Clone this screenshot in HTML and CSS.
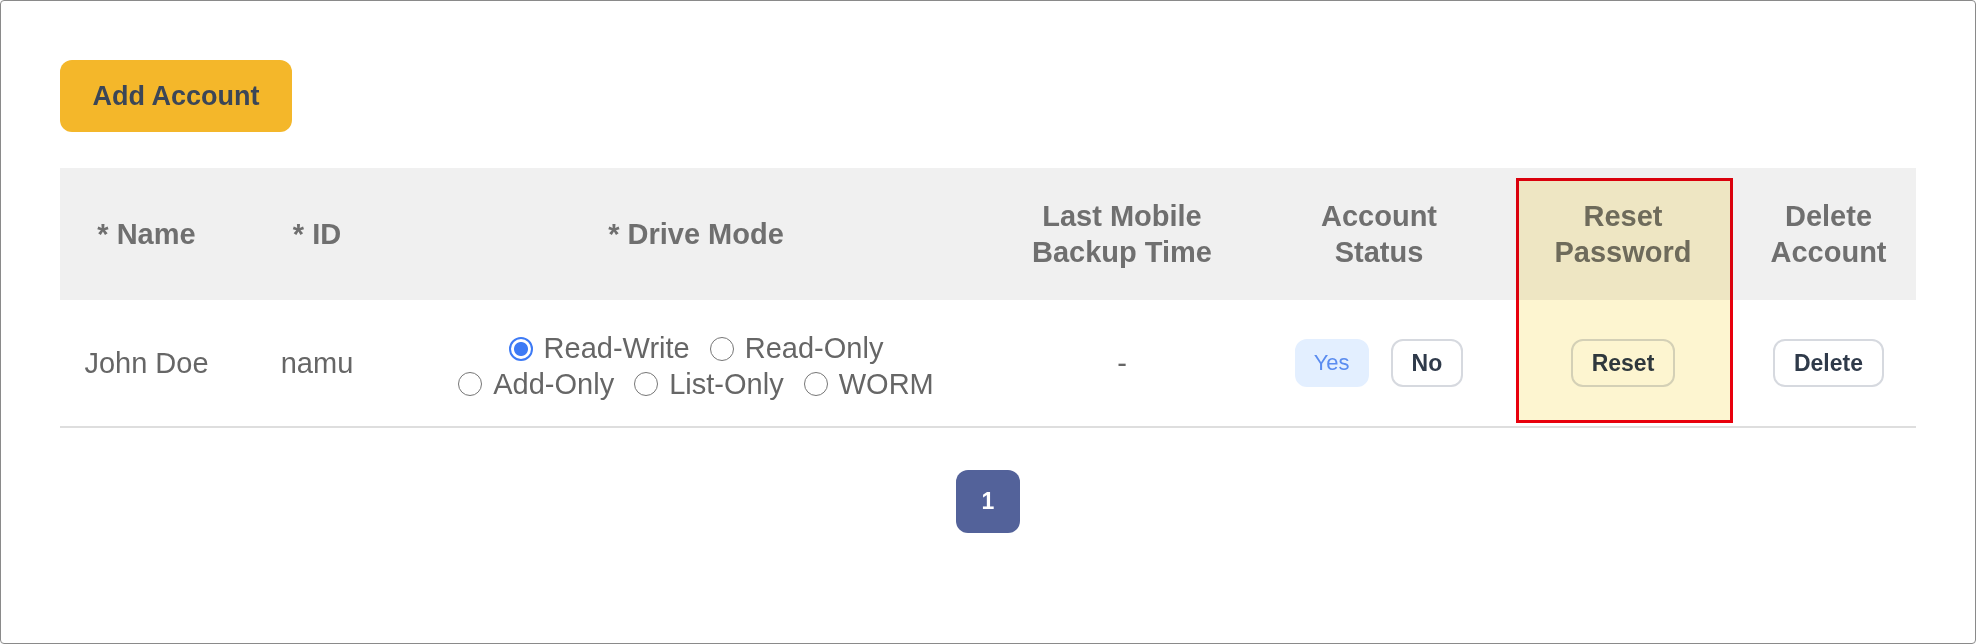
FILE: index.html
```html
<!DOCTYPE html>
<html lang="en">
<head>
    <meta charset="UTF-8">
    <title>Accounts</title>
    <link rel="stylesheet" href="styles.css">
</head>
<body>
    <div class="frame">
        <button class="addButton">Add Account</button>

        <div class="tableWrap">
            <table class="accountTable">
                <colgroup>
                    <col class="colName">
                    <col class="colId">
                    <col class="colMode">
                    <col class="colBackup">
                    <col class="colStatus">
                    <col class="colReset">
                    <col class="colDelete">
                </colgroup>
                <thead>
                    <tr>
                        <th>* Name</th>
                        <th>* ID</th>
                        <th>* Drive Mode</th>
                        <th>Last Mobile<br>Backup Time</th>
                        <th>Account<br>Status</th>
                        <th>Reset<br>Password</th>
                        <th>Delete<br>Account</th>
                    </tr>
                </thead>
                <tbody>
                    <tr>
                        <td>John Doe</td>
                        <td>namu</td>
                        <td>
                            <div class="modeGroup">
                                <div class="modeLine">
                                    <label><input type="radio" name="mode" checked>Read-Write</label>
                                    <label><input type="radio" name="mode">Read-Only</label>
                                </div>
                                <div class="modeLine">
                                    <label><input type="radio" name="mode">Add-Only</label>
                                    <label><input type="radio" name="mode">List-Only</label>
                                    <label><input type="radio" name="mode">WORM</label>
                                </div>
                            </div>
                        </td>
                        <td>-</td>
                        <td>
                            <div class="statusGroup">
                                <button class="pill pillYes">Yes</button>
                                <button class="pill">No</button>
                            </div>
                        </td>
                        <td><button class="pill">Reset</button></td>
                        <td><button class="pill">Delete</button></td>
                    </tr>
                </tbody>
            </table>
            <!-- 강조 표시 박스 -->
            <div class="highlightBox"></div>
        </div>

        <div class="pager">
            <button class="pageButton">1</button>
        </div>
    </div>
</body>
</html>
```

FILE: styles.css
```css
body {
    margin: 0;
    font-family: "Liberation Sans", Arial, sans-serif;
    background: #ffffff;
}
.frame {
    height: 644px;
    box-sizing: border-box;
    border: 1px solid #8a8a8a;
    border-radius: 4px;
    padding: 59px 59px 0;
}
.addButton {
    width: 232px;
    height: 72px;
    border: none;
    border-radius: 12px;
    background: #f4b72a;
    color: #3b4657;
    font-family: inherit;
    font-size: 27px;
    font-weight: 700;
}
.tableWrap {
    position: relative;
    margin-top: 36px;
}
.accountTable {
    width: 1856px;
    border-collapse: collapse;
    table-layout: fixed;
}
.colName { width: 173px; }
.colId { width: 168px; }
.colMode { width: 590px; }
.colBackup { width: 262px; }
.colStatus { width: 252px; }
.colReset { width: 236px; }
.colDelete { width: 175px; }

.accountTable th {
    height: 132px;
    padding: 0;
    background: #f0f0f0;
    color: #6f6f6f;
    font-size: 29px;
    font-weight: 700;
    line-height: 36px;
    text-align: center;
}
.accountTable td {
    height: 126px;
    padding: 0;
    border-bottom: 2px solid #dedede;
    color: #666666;
    font-size: 29px;
    text-align: center;
    vertical-align: middle;
}
.modeGroup {
    padding-top: 9px;
    line-height: 33px;
    color: #666666;
}
.modeLine label {
    display: inline-flex;
    align-items: center;
    margin: 0 6px;
}
.modeLine input {
    appearance: none;
    width: 24px;
    height: 24px;
    margin: 0 11px 0 0;
    border: 1.5px solid #767676;
    border-radius: 50%;
    box-sizing: border-box;
}
.modeLine input:checked {
    border: 2px solid #3d7af5;
    background: radial-gradient(circle, #3d7af5 0 6.5px, #ffffff 7.5px);
}
.statusGroup {
    display: flex;
    justify-content: center;
    gap: 22px;
}
.pill {
    height: 48px;
    padding: 0 19px;
    border: 2px solid #d6d9df;
    border-radius: 12px;
    background: #ffffff;
    color: #2f3a4a;
    font-family: inherit;
    font-size: 23px;
    font-weight: 700;
}
.pillYes {
    padding: 0 17px;
    border-color: #e3efff;
    background: #e3efff;
    color: #5a8cf0;
    font-size: 22px;
    font-weight: 400;
}
.highlightBox {
    position: absolute;
    left: 1456px;
    top: 10px;
    width: 217px;
    height: 245px;
    box-sizing: border-box;
    border: 3px solid #e8000c;
    background: #fdf5d0;
    mix-blend-mode: multiply;
}
.pager {
    display: flex;
    justify-content: center;
    margin-top: 42px;
}
.pageButton {
    width: 64px;
    height: 63px;
    border: none;
    border-radius: 12px;
    background: #53629a;
    color: #ffffff;
    font-family: inherit;
    font-size: 23px;
    font-weight: 700;
}
```
